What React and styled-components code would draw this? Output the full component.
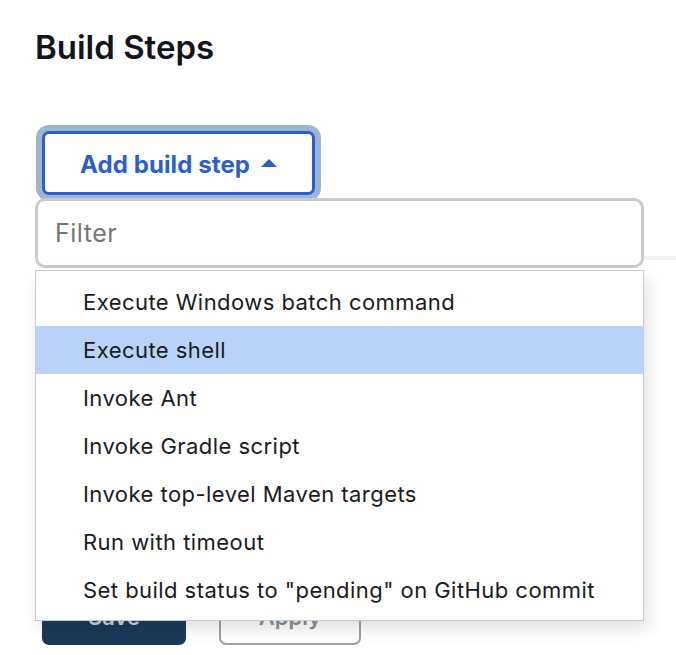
import React from 'react';
import styled, { createGlobalStyle } from 'styled-components';

const items = [
  'Execute Windows batch command',
  'Execute shell',
  'Invoke Ant',
  'Invoke Gradle script',
  'Invoke top-level Maven targets',
  'Run with timeout',
  'Set build status to "pending" on GitHub commit',
];

function App() {
  return (
    <>
      <GlobalStyle />
      <Page>
        <Heading>Build Steps</Heading>
        <Dropdown>
          <AddButton type='button'>
            Add build step
            <Caret viewBox='0 0 16 8' aria-hidden='true'>
              <path d='M0 8L8 0L16 8Z' fill='currentColor' />
            </Caret>
          </AddButton>
          <Menu>
            <FilterInput placeholder='Filter' />
            <List>
              {items.map((label, i) => (
                <Item key={label} active={i === 1}>
                  {label}
                </Item>
              ))}
            </List>
          </Menu>
        </Dropdown>
        <Divider />
        <BottomBar>
          <SaveButton type='button'>Save</SaveButton>
          <ApplyButton type='button'>Apply</ApplyButton>
        </BottomBar>
      </Page>
    </>
  );
}

export default App;

const GlobalStyle = createGlobalStyle`
  html, body {
    margin: 0;
    padding: 0;
    background: #ffffff;
  }
  body {
    font-family: Inter, 'Noto Sans', sans-serif;
    -webkit-font-smoothing: antialiased;
  }
`;

const Page = styled.div`
  position: relative;
  width: 676px;
  height: 655px;
  overflow: hidden;
  padding: 27px 0 0 35px;
  box-sizing: border-box;
`;

const Heading = styled.h2`
  margin: 0;
  font-size: 33px;
  line-height: 40px;
  font-weight: 600;
  color: #14141f;
  letter-spacing: 0;
`;

const Dropdown = styled.div`
  position: relative;
  margin: 64px 0 0 7px;
  width: 273px;
`;

const AddButton = styled.button`
  display: flex;
  align-items: center;
  justify-content: center;
  gap: 11px;
  width: 273px;
  height: 64px;
  padding: 3px 0 0;
  border: 3px solid #2a5fcf;
  border-radius: 7px;
  background: #ffffff;
  box-shadow: 0 0 0 6px #9db6d0;
  color: #2a5fcf;
  font-family: Inter, 'Noto Sans', sans-serif;
  font-size: 24px;
  font-weight: 700;
  letter-spacing: 0.1px;
  cursor: pointer;
`;

const Caret = styled.svg`
  width: 16px;
  height: 8px;
  margin-top: -3px;
`;

const Menu = styled.div`
  position: absolute;
  top: calc(100% + 3px);
  left: -7px;
  width: 609px;
  z-index: 2;
`;

const FilterInput = styled.input`
  display: block;
  width: 100%;
  height: 70px;
  box-sizing: border-box;
  padding: 0 17px;
  border: 3px solid #c5ccd2;
  border-radius: 10px;
  background: #ffffff;
  font-family: Inter, 'Noto Sans', sans-serif;
  font-size: 25px;
  letter-spacing: 0.5px;
  color: #1f1f1f;
  outline: none;
  &::placeholder {
    color: #767676;
  }
`;

const List = styled.ul`
  list-style: none;
  margin: 2px 0 0;
  padding: 7px 0 6px;
  background: #ffffff;
  border: 1px solid #c6ccd2;
  box-shadow: 4px 8px 16px rgba(0, 0, 0, 0.12);
`;

const Item = styled.li`
  height: 48px;
  display: flex;
  align-items: center;
  padding-left: 47px;
  font-size: 22px;
  letter-spacing: 0.45px;
  color: #1b1b1b;
  background: ${(p) => (p.active ? '#b9d3f8' : 'transparent')};
`;

const Divider = styled.div`
  margin: 61px 0 0;
  height: 4px;
  background: #eef0f4;
`;

const BottomBar = styled.div`
  display: flex;
  gap: 33px;
  margin: 328px 0 0 7px;
`;

const BaseButton = styled.button`
  height: 57px;
  padding: 0;
  border-radius: 7px;
  font-family: Inter, 'Noto Sans', sans-serif;
  font-size: 22px;
  font-weight: 600;
`;

const SaveButton = styled(BaseButton)`
  width: 144px;
  border: none;
  background: #1b3a5a;
  color: #c9d2dc;
`;

const ApplyButton = styled(BaseButton)`
  width: 142px;
  border: 2px solid #9aa1a9;
  background: #ffffff;
  color: #8a919a;
`;
